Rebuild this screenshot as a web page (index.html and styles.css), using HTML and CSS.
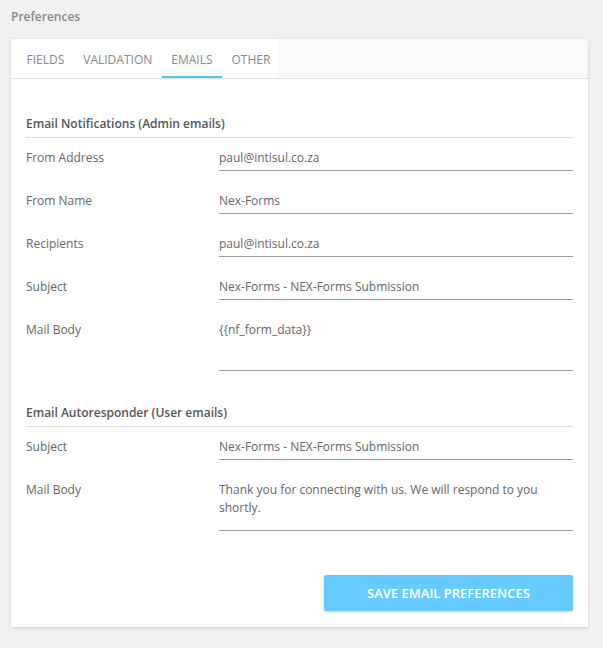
FILE: index.html
```html
<!DOCTYPE html>
<html lang="en">

<head>
    <meta charset="UTF-8">
    <meta name="viewport" content="width=device-width, initial-scale=1.0">
    <title>Preferences</title>
    <link rel="stylesheet" href="styles.css">
</head>

<body>
    <h1 class="page-title">Preferences</h1>
    <div class="card">
        <div class="tabs">
            <ul class="tab-list">
                <li class="tab">Fields</li>
                <li class="tab">Validation</li>
                <li class="tab active">Emails</li>
                <li class="tab">Other</li>
            </ul>
        </div>
        <div class="panel">
            <div class="section">
                <h2 class="section-title">Email Notifications (Admin emails)</h2>
                <div class="field">
                    <label>From Address</label>
                    <input type="text" value="paul@intisul.co.za">
                </div>
                <div class="field">
                    <label>From Name</label>
                    <input type="text" value="Nex-Forms">
                </div>
                <div class="field">
                    <label>Recipients</label>
                    <input type="text" value="paul@intisul.co.za">
                </div>
                <div class="field">
                    <label>Subject</label>
                    <input type="text" value="Nex-Forms - NEX-Forms Submission">
                </div>
                <div class="field">
                    <label>Mail Body</label>
                    <textarea>{{nf_form_data}}</textarea>
                </div>
            </div>
            <div class="section">
                <h2 class="section-title">Email Autoresponder (User emails)</h2>
                <div class="field">
                    <label>Subject</label>
                    <input type="text" value="Nex-Forms - NEX-Forms Submission">
                </div>
                <div class="field">
                    <label>Mail Body</label>
                    <textarea>Thank you for connecting with us. We will respond to you shortly.</textarea>
                </div>
            </div>
            <div class="actions">
                <button class="btn-save">Save Email Preferences</button>
            </div>
        </div>
    </div>
</body>

</html>
```

FILE: styles.css
```css
* {
    margin: 0;
    padding: 0;
    box-sizing: border-box;
}

body {
    font-family: "Open Sans", Arial, sans-serif;
    font-size: 12px;
    color: #666;
    background-color: #f1f1f1;
    padding: 8px 15px 21px 11px;
}

.page-title {
    font-size: 12px;
    font-weight: 600;
    color: #8a8a8a;
    line-height: 18px;
    margin-bottom: 13px;
}

.card {
    background: #fff;
    box-shadow: 0 1px 3px rgba(0, 0, 0, 0.15);
}

.tabs {
    height: 40px;
    background: #fafafa;
    border-bottom: 1px solid #e2e2e2;
}

.tab-list {
    list-style: none;
    display: flex;
    height: 39px;
    width: 266px;
    padding-left: 6px;
    background: #fff;
}

.tab {
    padding: 3px 9.5px 0;
    line-height: 36px;
    text-transform: uppercase;
    color: #888;
}

.tab.active {
    border-bottom: 2px solid #4fc3f7;
}

.panel {
    padding: 35px 15px 16px 15px;
}

.section + .section {
    margin-top: 32px;
}

.section-title {
    font-size: 12px;
    font-weight: 600;
    color: #555;
    line-height: 20px;
    padding-bottom: 3px;
    border-bottom: 1px solid #ddd;
    margin-bottom: 10px;
}

.field {
    display: grid;
    grid-template-columns: 193px 1fr;
    margin-bottom: 20px;
}

.field label {
    line-height: 20px;
    color: #666;
}

.field input,
.field textarea {
    font-family: inherit;
    font-size: 12px;
    color: #666;
    border: none;
    border-bottom: 1px solid #999;
    outline: none;
    background: transparent;
    line-height: 20px;
    padding: 0 0 2px 0;
    width: 100%;
}

.field textarea {
    resize: none;
    overflow: hidden;
    height: 51px;
    line-height: 17.5px;
    padding-top: 1px;
}

.actions {
    display: flex;
    justify-content: flex-end;
    margin-top: 44px;
}

.btn-save {
    width: 249px;
    height: 36px;
    border: none;
    border-radius: 2px;
    background: #66ccff;
    color: #fff;
    font-family: inherit;
    font-size: 13px;
    font-weight: 600;
    text-transform: uppercase;
    box-shadow: 0 1px 3px rgba(0, 0, 0, 0.2);
}
```
